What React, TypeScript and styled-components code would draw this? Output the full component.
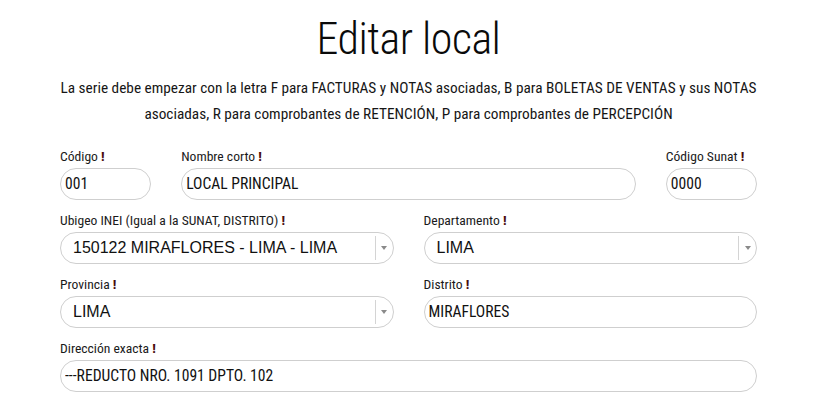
import styled, { createGlobalStyle } from "styled-components";

const GlobalStyle = createGlobalStyle`
  body {
    margin: 0;
    background: #ffffff;
    font-family: Roboto, "Open Sans", sans-serif;
    font-stretch: 75%;
    color: #111111;
  }
`;

const Required = () => <Bang>!</Bang>;

export default function App() {
  return (
    <Page>
      <GlobalStyle />
      <Title>Editar local</Title>
      <Intro>
        <IntroLine>
          La serie debe empezar con la letra F para FACTURAS y NOTAS asociadas, B para BOLETAS DE
          VENTAS y sus NOTAS
        </IntroLine>
        <IntroLine>
          asociadas, R para comprobantes de RETENCIÓN, P para comprobantes de PERCEPCIÓN
        </IntroLine>
      </Intro>

      <Row>
        <Field $span={2}>
          <Label>
            Código <Required />
          </Label>
          <TextInput defaultValue="001" />
        </Field>
        <Field $span={8}>
          <Label>
            Nombre corto <Required />
          </Label>
          <TextInput defaultValue="LOCAL PRINCIPAL" />
        </Field>
        <Field $span={2}>
          <Label>
            Código Sunat <Required />
          </Label>
          <TextInput defaultValue="0000" />
        </Field>
      </Row>

      <Row>
        <Field $span={6}>
          <Label>
            Ubigeo INEI (Igual a la SUNAT, DISTRITO) <Required />
          </Label>
          <SelectBox>
            <SelectValue>150122 MIRAFLORES - LIMA - LIMA</SelectValue>
            <SelectArrow />
          </SelectBox>
        </Field>
        <Field $span={6}>
          <Label>
            Departamento <Required />
          </Label>
          <SelectBox>
            <SelectValue>LIMA</SelectValue>
            <SelectArrow />
          </SelectBox>
        </Field>
      </Row>

      <Row>
        <Field $span={6}>
          <Label>
            Provincia <Required />
          </Label>
          <SelectBox>
            <SelectValue>LIMA</SelectValue>
            <SelectArrow />
          </SelectBox>
        </Field>
        <Field $span={6}>
          <Label>
            Distrito <Required />
          </Label>
          <TextInput defaultValue="MIRAFLORES" />
        </Field>
      </Row>

      <Row>
        <Field $span={12}>
          <Label>
            Dirección exacta <Required />
          </Label>
          <TextInput defaultValue="---REDUCTO NRO. 1091 DPTO. 102" />
        </Field>
      </Row>
    </Page>
  );
}

const Page = styled.div`
  padding: 0 65px 0 60px;
`;

const Title = styled.h1`
  margin: 0;
  padding-top: 13px;
  font-size: 44px;
  line-height: 53px;
  font-weight: 300;
  letter-spacing: -0.5px;
  text-align: center;
  color: #0a0a0a;
`;

const Intro = styled.div`
  margin: 9px 0 21px;
  font-size: 15.3px;
  line-height: 26px;
  text-align: center;
  color: #161616;
`;

const IntroLine = styled.div`
  white-space: nowrap;
`;

const Row = styled.div`
  display: grid;
  grid-template-columns: repeat(12, 1fr);
  column-gap: 30px;
`;

const Field = styled.div<{ $span: number }>`
  grid-column: span ${(p) => p.$span};
  display: flex;
  flex-direction: column;
  margin-bottom: 12px;
`;

const Label = styled.label`
  font-size: 13.6px;
  line-height: 17px;
  margin-bottom: 3px;
  color: #1a1a1a;
  white-space: nowrap;
`;

const Bang = styled.span`
  font-weight: 800;
  color: #4a0d0d;
`;

const TextInput = styled.input`
  box-sizing: border-box;
  width: 100%;
  height: 32px;
  padding: 0 4px;
  border: 1px solid #cfcfcf;
  border-radius: 16px;
  font-family: inherit;
  font-stretch: 75%;
  font-size: 15.6px;
  color: #111111;
  background: #ffffff;
  outline: none;
`;

const SelectBox = styled.div`
  box-sizing: border-box;
  height: 32px;
  display: flex;
  align-items: stretch;
  border: 1px solid #cfcfcf;
  border-radius: 16px;
  background: #ffffff;
`;

const SelectValue = styled.span`
  flex: 1;
  display: flex;
  align-items: center;
  padding-left: 12px;
  font-family: "Liberation Sans", Arial, sans-serif;
  font-stretch: normal;
  font-size: 16px;
  color: #111111;
  white-space: nowrap;
  overflow: hidden;
`;

const SelectArrow = styled.span`
  width: 17px;
  margin: 3px 0;
  border-left: 1px solid #d4d4d4;
  display: flex;
  align-items: center;
  justify-content: center;
  &::after {
    content: "";
    border-left: 3px solid transparent;
    border-right: 3px solid transparent;
    border-top: 4px solid #8a8a8a;
  }
`;
